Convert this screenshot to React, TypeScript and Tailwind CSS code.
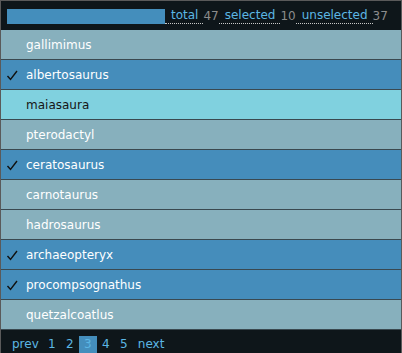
import React from "react";

const rows = [
  { name: "gallimimus", selected: false },
  { name: "albertosaurus", selected: true },
  { name: "maiasaura", selected: false, hover: true },
  { name: "pterodactyl", selected: false },
  { name: "ceratosaurus", selected: true },
  { name: "carnotaurus", selected: false },
  { name: "hadrosaurus", selected: false },
  { name: "archaeopteryx", selected: true },
  { name: "procompsognathus", selected: true },
  { name: "quetzalcoatlus", selected: false },
];

function Check() {
  return (
    <svg width="12" height="11" viewBox="0 0 12 11" className="absolute left-[5px] top-[10px]">
      <path d="M1.5 6 L4.5 9.5 L11 1" fill="none" stroke="#111" strokeWidth="1.4" />
    </svg>
  );
}

function Stat({ label, value }: { label: string; value: number }) {
  return (
    <span className="flex items-center">
      <a className="pl-[6px] pr-[5px] text-[#5cb6e4] border-b border-dotted border-[#c8c8c8] leading-[15px]">
        {label}
      </a>
      <span className="text-[#8c8c8c] leading-[15px]">{value}</span>
    </span>
  );
}

export default function App() {
  const pages = [1, 2, 3, 4, 5];
  return (
    <div
      className="w-[402px] h-[353px] border-x border-t border-[#5a5a5a] bg-[#0e161a] text-[12px] overflow-hidden"
      style={{ fontFamily: '"DejaVu Sans", Verdana, sans-serif' }}
    >
      <div className="h-[29px] flex items-center pl-[6px] pt-[1px]">
        <div className="w-[158px] h-[15px] bg-[#448ebc] mr-0" />
        <Stat label="total" value={47} />
        <Stat label="selected" value={10} />
        <Stat label="unselected" value={37} />
      </div>
      <div>
        {rows.map((r) => (
          <div
            key={r.name}
            className={
              "relative h-[30px] border-b border-[#3a4950] flex items-center pl-[25px] " +
              (r.hover
                ? "bg-[#80d1df] text-[#161616]"
                : r.selected
                ? "bg-[#458dbb] text-white"
                : "bg-[#87b0bd] text-white")
            }
          >
            {r.selected && <Check />}
            <span>{r.name}</span>
          </div>
        ))}
      </div>
      <div className="h-[23px] pt-[5px] pl-[11px]">
        <div className="inline-flex h-[18px] items-center border-b border-dotted border-[#c8c8c8] text-[#5cb6e4] leading-[17px]">
          <a className="pr-[4px]">prev</a>
          {pages.map((p) => (
            <a
              key={p}
              className={"w-[18px] h-[18px] flex items-center justify-center " + (p === 3 ? "bg-[#448ebc]" : "")}
            >
              {p}
            </a>
          ))}
          <a className="pl-[5px]">next</a>
        </div>
      </div>
    </div>
  );
}
